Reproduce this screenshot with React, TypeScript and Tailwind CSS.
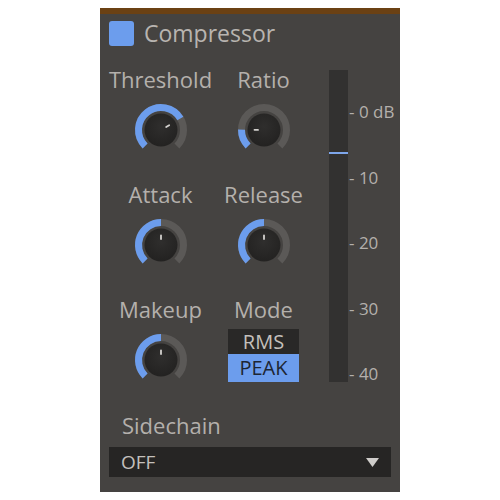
import React from 'react';

const BLUE = '#6c9ded';

const polar = (cx: number, cy: number, r: number, deg: number) => {
  const a = (deg * Math.PI) / 180;
  return [cx + r * Math.sin(a), cy - r * Math.cos(a)];
};

const arc = (r: number, from: number, to: number) => {
  const [x1, y1] = polar(28, 28, r, from);
  const [x2, y2] = polar(28, 28, r, to);
  const large = to - from > 180 ? 1 : 0;
  return `M ${x1} ${y1} A ${r} ${r} 0 ${large} 1 ${x2} ${y2}`;
};

const Knob: React.FC<{ value: number }> = ({ value }) => {
  const end = -135 + 270 * value;
  const [px1, py1] = polar(28, 28, 6, end);
  const [px2, py2] = polar(28, 28, 9.5, end);
  return (
    <svg width="56" height="56" viewBox="0 0 56 56">
      <defs>
        <radialGradient id="kb" cx="50%" cy="40%" r="60%">
          <stop offset="0%" stopColor="#2f2e2d" />
          <stop offset="100%" stopColor="#232221" />
        </radialGradient>
      </defs>
      <path d={arc(22.5, -135, 135)} stroke="#5b5957" strokeWidth="7" fill="none" />
      <path d={arc(22.5, -135, end)} stroke={BLUE} strokeWidth="7" fill="none" />
      <circle cx="28" cy="28" r="16.5" fill="url(#kb)" />
      <line x1={px1} y1={py1} x2={px2} y2={py2} stroke="#d4d2cf" strokeWidth="1.8" strokeLinecap="round" />
    </svg>
  );
};

const Label: React.FC<{ children: React.ReactNode }> = ({ children }) => (
  <div className="h-[30px] leading-[30px] text-[22px] text-[#b4b0ac]">{children}</div>
);

const KnobCell: React.FC<{ label: string; value: number }> = ({ label, value }) => (
  <div className="flex flex-col items-center">
    <Label>{label}</Label>
    <div className="mt-[8px]">
      <Knob value={value} />
    </div>
  </div>
);

export default function App() {
  return (
    <div className="w-[500px] h-[500px] bg-white flex justify-center pt-[8px]" style={{ fontFamily: '"Open Sans", "Noto Sans", sans-serif' }}>
      <div className="w-[300px] h-[484px] bg-[#454341] border-t-[6px] border-[#6b4114] flex flex-col">
        {/* Header */}
        <div className="flex items-center gap-[10px] pl-[9px] pt-[7px]">
          <div className="w-[25px] h-[25px] rounded-[3px] bg-[#6c9ded]" />
          <span className="text-[23px] leading-[25px] text-[#b8b4b0]">Compressor</span>
        </div>

        <div className="flex mt-[18px]">
          {/* Controls */}
          <div className="grid grid-cols-[103px_103px] grid-rows-[115px_115px_115px] pl-[9px]">
            <KnobCell label="Threshold" value={0.72} />
            <KnobCell label="Ratio" value={0.17} />
            <KnobCell label="Attack" value={0.5} />
            <KnobCell label="Release" value={0.5} />
            <KnobCell label="Makeup" value={0.5} />
            <div className="flex flex-col items-center">
              <Label>Mode</Label>
              <div className="mt-[5px] w-[71px] flex flex-col text-[20px]">
                <div className="h-[25px] leading-[25px] text-center bg-[#292827] text-[#c4c0bc]">RMS</div>
                <div className="h-[28px] leading-[28px] text-center bg-[#6c9ded] text-[#1d2633]">PEAK</div>
              </div>
            </div>
          </div>

          {/* Meter */}
          <div className="flex ml-[14px] pt-[6px]">
            <div className="w-[19px] h-[312px] bg-[#323130] flex flex-col">
              <div className="mt-[82px] h-[2px] bg-[#7ea6ea]" />
            </div>
            <div className="ml-[1px] mt-[32px] h-[282px] flex flex-col justify-between text-[17px] leading-[20px] text-[#b4b0ac]">
              <span>- 0 dB</span>
              <span>- 10</span>
              <span>- 20</span>
              <span>- 30</span>
              <span>- 40</span>
            </div>
          </div>
        </div>

        {/* Sidechain */}
        <div className="pl-[22px] mt-[1px]">
          <Label>Sidechain</Label>
        </div>
        <div className="mx-[9px] mt-[7px] h-[30px] bg-[#262524] flex items-center justify-between pl-[12px] pr-[12px]">
          <span className="text-[19px] text-[#c4c0bc]">OFF</span>
          <svg width="13" height="9" viewBox="0 0 13 9">
            <path d="M0 0 L13 0 L6.5 9 Z" fill="#cfcdca" />
          </svg>
        </div>
      </div>
    </div>
  );
}
